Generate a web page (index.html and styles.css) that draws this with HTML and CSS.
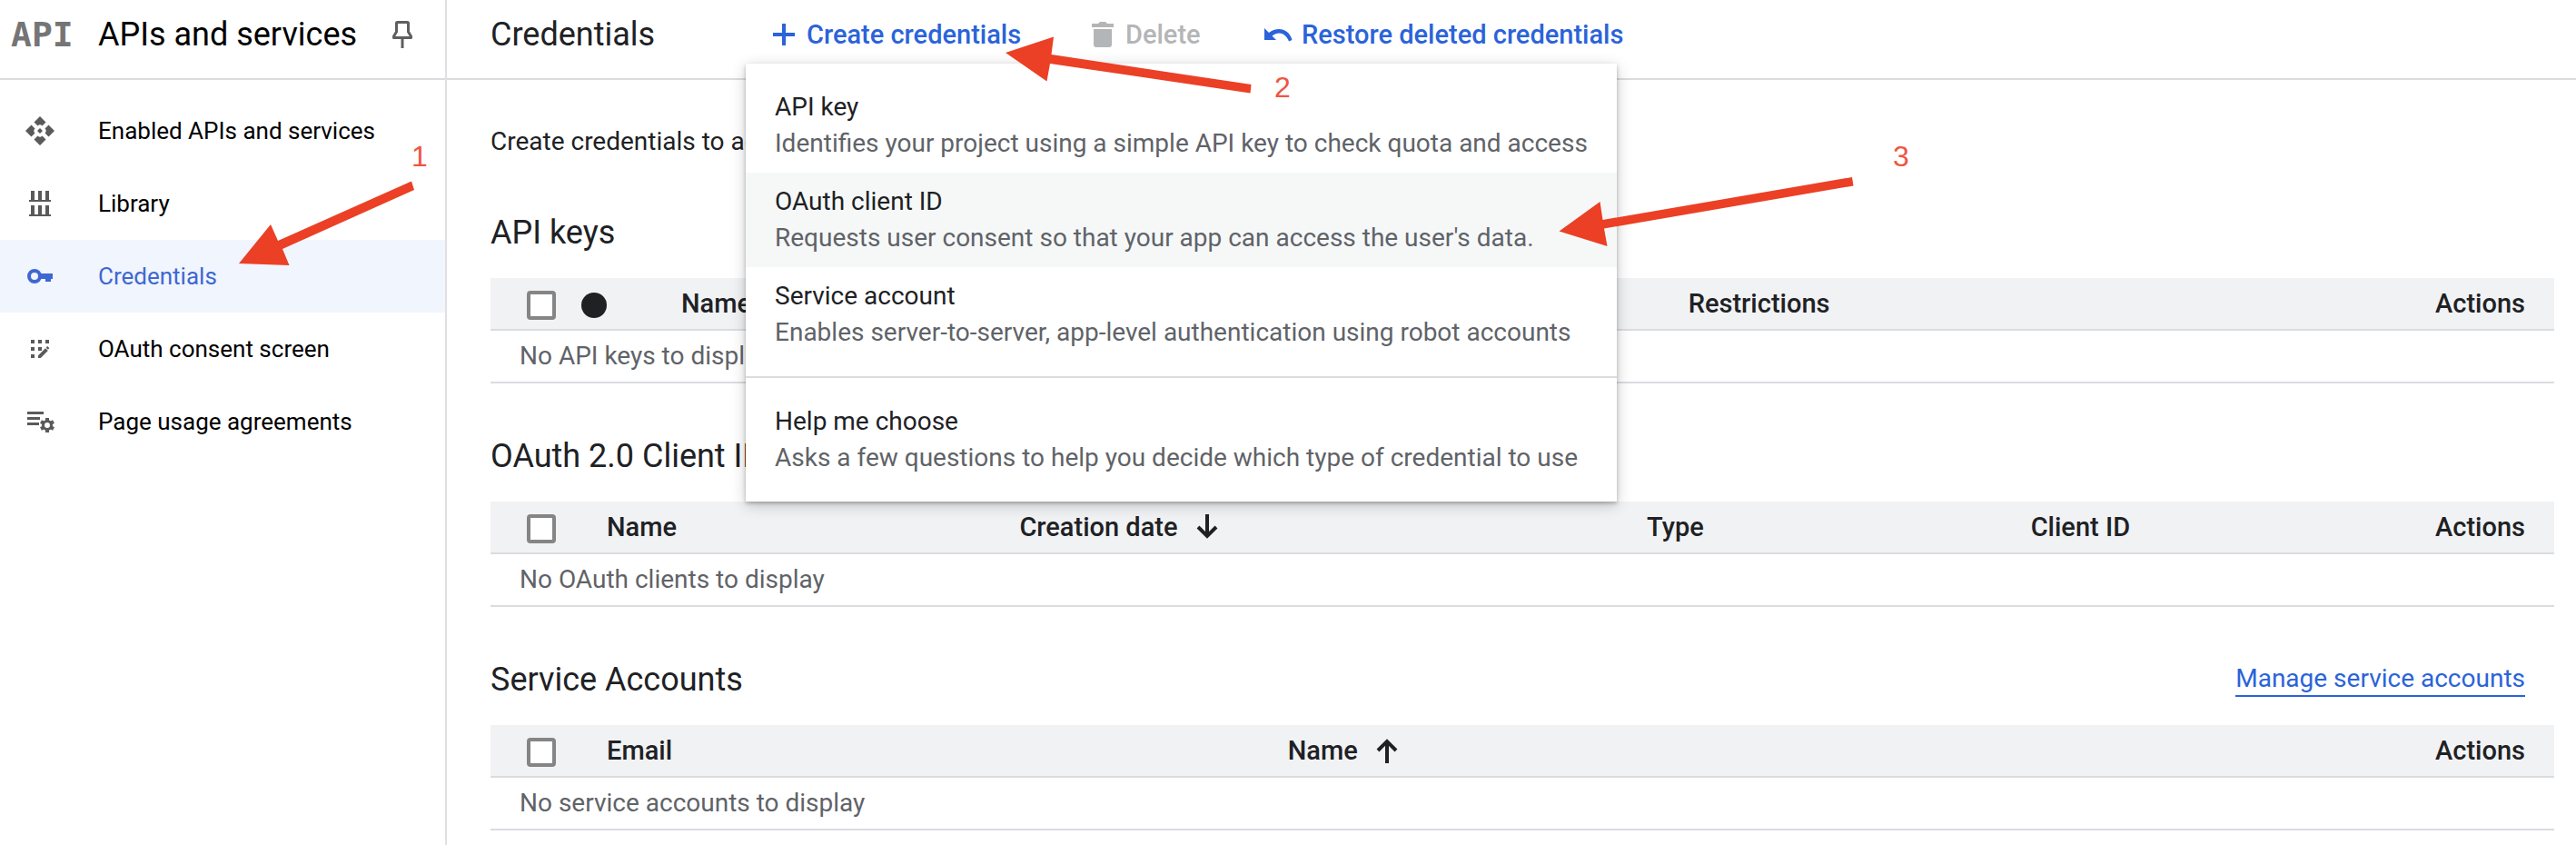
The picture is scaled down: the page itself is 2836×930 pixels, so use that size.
FILE: index.html
```html
<!DOCTYPE html>
<html lang="en">
<head>
<meta charset="utf-8">
<title>Credentials – APIs and services</title>
<link rel="stylesheet" href="styles.css">
</head>
<body>
<div class="app">
  <aside class="sidebar">
    <header class="bar sidebar-bar">
      <span class="logo">API</span>
      <span class="product">APIs and services</span>
      <button class="pin" type="button" aria-label="Pin">
        <svg viewBox="0 0 22 30" width="22" height="30" fill="none" stroke="#5f5f5f" stroke-width="3"><path d="M4.500 2.500Q4.500 1.500 5.500 1.500H16.500Q17.500 1.500 17.500 2.500V12L20.500 17V18.500H1.500V17L4.500 12Z" stroke-linejoin="round"/><path d="M11 18V30"/></svg>
      </button>
    </header>
    <nav class="nav">
      <a class="nav-item" href="#">
        <svg class="icon" viewBox="0 0 36 36"><path d="M18 2l6.500 6.500-4 4Q18 10 15.500 12.500l-4-4zM18 34l6.500-6.500-4-4Q18 26 15.500 23.500l-4 4zM2 18l6.500-6.500 4 4Q10 18 12.500 20.500l-4 4zM34 18l-6.500-6.500-4 4Q26 18 23.500 20.500l4 4zM18 15l3 3-3 3-3-3z"/></svg>
        Enabled APIs and services</a>
      <a class="nav-item" href="#">
        <svg class="icon" viewBox="0 0 18 18"><path d="M4 2h2v5h2V2h2v5h2V2h2v5h1v1H3V7h1zM4 10h2v5h2v-5h2v5h2v-5h2v5h1v1H3v-1h1z"/></svg>
        Library</a>
      <a class="nav-item selected" href="#" aria-current="page">
        <svg class="icon" viewBox="0 0 36 36"><circle cx="12" cy="18" r="6" fill="none" stroke="currentColor" stroke-width="4"/><path d="M19 15h13v6h-2v3h-6v-3h-5z"/></svg>
        Credentials</a>
      <a class="nav-item" href="#">
        <svg class="icon" viewBox="0 0 18 18"><path d="M4 4h2v2H4zM8 4h2v2H8zM12 4h2v2h-2zM4 8h2v2H4zM8 8h2v2H8zM4 12h2v2H4zM8 14v-1.400l4-4 1.400 1.400-4 4zM12.300 8.300l.8-.8 1.100 1.100-.8.8z"/></svg>
        OAuth consent screen</a>
      <a class="nav-item" href="#">
        <svg class="icon" viewBox="0 0 36 36"><path d="M4 7h18v3H4zM4 13h14v3H4zM4 19h13v3H4z"/><circle cx="26" cy="22" r="4.500" fill="none" stroke="currentColor" stroke-width="3"/><path d="M26 14v3M26 27v3M19 18l2.700 1.500M30.300 24.500l2.700 1.500M19 26l2.700-1.500M30.300 19.500l2.700-1.500" stroke="currentColor" stroke-width="4"/></svg>
        Page usage agreements</a>
    </nav>
  </aside>

  <main class="main">
    <header class="bar main-bar">
      <h1 class="title">Credentials</h1>
      <div class="toolbar">
        <div class="menu-anchor">
          <button class="action" type="button" aria-haspopup="menu" aria-expanded="true">
            <svg class="icon" viewBox="0 0 36 36"><path d="M16 6h4v10h10v4H20v10h-4V20H6v-4h10z"/></svg>Create credentials</button>
          <div class="menu" role="menu">
            <button class="menu-item" type="button" role="menuitem"><span>API key</span><span class="hint">Identifies your project using a simple API key to check quota and access</span></button>
            <button class="menu-item hovered" type="button" role="menuitem"><span>OAuth client ID</span><span class="hint">Requests user consent so that your app can access the user's data.</span></button>
            <button class="menu-item" type="button" role="menuitem"><span>Service account</span><span class="hint">Enables server-to-server, app-level authentication using robot accounts</span></button>
            <hr class="menu-rule">
            <button class="menu-item" type="button" role="menuitem"><span>Help me choose</span><span class="hint">Asks a few questions to help you decide which type of credential to use</span></button>
          </div>
        </div>
        <button class="action action-delete" type="button" disabled>
          <svg class="icon" viewBox="0 0 36 36"><path d="M13 6l2-2h6l2 2h7v4H6V6zM8 12h20v17q0 3-3 3H11q-3 0-3-3z"/></svg>Delete</button>
        <button class="action" type="button">
          <svg class="icon" viewBox="0 0 36 36"><path d="M2 11l5 5C16 9 29 11 32.500 24L29 25.500C25 15.500 17 14.500 10.500 19.500L15 24H2z"/></svg>Restore deleted credentials</button>
      </div>
    </header>

    <div class="content">
      <p class="intro">Create credentials to access your enabled APIs.</p>

      <section>
        <div class="section-head"><h2>API keys</h2></div>
        <table class="grid">
          <colgroup><col class="c-check-narrow"><col class="c-status"><col class="c-key-name"><col><col class="c-actions"></colgroup>
          <thead><tr>
            <th class="check"><input type="checkbox" aria-label="Select all API keys"></th>
            <th><span class="status-dot"></span></th>
            <th>Name</th><th>Restrictions</th><th class="actions">Actions</th>
          </tr></thead>
          <tbody><tr><td colspan="5">No API keys to display</td></tr></tbody>
        </table>
      </section>

      <section>
        <div class="section-head"><h2>OAuth 2.0 Client IDs</h2></div>
        <table class="grid">
          <colgroup><col class="c-check"><col class="c-client-name"><col class="c-date"><col class="c-type"><col><col class="c-actions"></colgroup>
          <thead><tr>
            <th class="check"><input type="checkbox" aria-label="Select all OAuth clients"></th>
            <th>Name</th>
            <th><span class="sorted">Creation date<svg class="sort" viewBox="0 0 24 28"><path d="M12 0v25M2 14l10 10 10-10"/></svg></span></th>
            <th>Type</th><th>Client ID</th><th class="actions">Actions</th>
          </tr></thead>
          <tbody><tr><td colspan="6">No OAuth clients to display</td></tr></tbody>
        </table>
      </section>

      <section>
        <div class="section-head"><h2>Service Accounts</h2><a class="manage" href="#">Manage service accounts</a></div>
        <table class="grid">
          <colgroup><col class="c-check"><col class="c-email"><col><col class="c-actions"></colgroup>
          <thead><tr>
            <th class="check"><input type="checkbox" aria-label="Select all service accounts"></th>
            <th>Email</th>
            <th><span class="sorted">Name<svg class="sort" viewBox="0 0 24 28"><path d="M12 28V3M2 14L12 4l10 10"/></svg></span></th>
            <th class="actions">Actions</th>
          </tr></thead>
          <tbody><tr><td colspan="4">No service accounts to display</td></tr></tbody>
        </table>
      </section>
    </div>
  </main>
</div>

<svg class="arrow arrow-1" viewBox="260 196 200 100"><path d="M263 290l35-43 8 18L453 199.500 456 209 311 274l7.500 18z"/></svg>
<svg class="arrow arrow-2" viewBox="1104 38 278 68"><path d="M1107 58l53-17.500-2.500 19.500L1377.500 93l-1 9.500L1156 70l-3.500 19.500z"/></svg>
<svg class="arrow arrow-3" viewBox="1712 192 332 82"><path d="M1716.500 254.500l45-32.500 3 20L2039 195l1.500 9.500L1766 251.500l3.500 19.500z"/></svg>
<span class="step step-1">1</span>
<span class="step step-2">2</span>
<span class="step step-3">3</span>
</body>
</html>
```

FILE: styles.css
```css
* { box-sizing: border-box; }

body {
  margin: 0;
  position: relative;
  overflow: hidden;
  background: #fff;
  color: #202124;
  font: 400 28px/40px Roboto, "Liberation Sans", sans-serif;
}

button { border: 0; padding: 0; background: none; font: inherit; color: inherit; }
h1, h2, p { margin: 0; font-weight: 400; }

.app { display: flex; min-height: 100vh; }
.icon { width: 36px; height: 36px; flex: none; fill: currentColor; }

.bar { display: flex; align-items: center; padding: 18px 0 28px; border-bottom: 2px solid #dadce0; }

/* Sidebar */
.sidebar { width: 492px; flex: none; border-right: 2px solid #e0e0e3; color: #000; }
.sidebar-bar { padding-left: 12px; padding-right: 36px; }
.logo { width: 96px; color: #757575; font: 700 38px/40px "DejaVu Sans Mono", monospace; }
.product { flex: 1; font-size: 36px; }
.pin { display: flex; }
.nav { padding-top: 16px; }
.nav-item {
  display: flex; align-items: center; gap: 46px;
  padding: 20px 26px;
  color: #000; font-size: 26px; text-decoration: none;
}
.nav-item .icon { color: #5a5a5a; }
.nav-item.selected { background: #f0f5fe; color: #3f67d2; }
.nav-item.selected .icon { color: inherit; }

/* Page header */
.main { flex: 1; min-width: 0; }
.main-bar { padding-left: 48px; }
.title { width: 305px; font-size: 36px; }
.toolbar { display: flex; gap: 64px; }
.action { display: flex; align-items: center; gap: 7px; color: #2b63d9; font-size: 29px; font-weight: 500; white-space: nowrap; }
.action:disabled { color: #b4b5b7; }
.action-delete { min-width: 130px; }

.menu-anchor { position: relative; min-width: 287px; }
.menu {
  position: absolute; top: 52px; left: -24px; z-index: 1;
  width: 959px; padding: 16px 0;
  background: #fff;
  box-shadow: 0 2px 4px rgba(0, 0, 0, .25), 0 4px 16px rgba(0, 0, 0, .2);
}
.menu-item { display: flex; flex-direction: column; width: 100%; padding: 12px 32px; text-align: left; white-space: nowrap; }
.menu-item.hovered { background: #f6f8f8; }
.hint { color: #5f6368; }
.menu-rule { margin: 16px 0; border: 0; border-top: 2px solid #dadce0; }

/* Content */
.content { padding: 48px 24px 0 48px; }
.section-head { display: flex; align-items: center; justify-content: space-between; padding: 60px 32px 30px 0; }
.section-head h2 { font-size: 36px; }
.manage { height: 38px; border-bottom: 2px solid #2b63d9; color: #2b63d9; line-height: 36px; text-decoration: none; }

.grid { width: 100%; table-layout: fixed; border-collapse: separate; border-spacing: 0; }
.grid th, .grid td { height: 58px; padding: 0; border-bottom: 2px solid #dadce0; text-align: left; vertical-align: middle; }
.grid th { background: #f1f2f4; font-size: 29px; font-weight: 500; }
.grid td { padding-left: 32px; color: #5f6368; }
.grid .check { padding-left: 40px; }
.grid .actions { padding-right: 32px; text-align: right; }
.grid input {
  display: block; appearance: none;
  width: 32px; height: 32px; margin: 4px 0 0;
  border: 4px solid #858585; border-radius: 4px; background: #fff;
}
.status-dot { display: block; width: 28px; height: 28px; margin-top: 4px; border-radius: 50%; background: #202124; }
.sorted { display: flex; align-items: center; gap: 20px; }
.sort { width: 24px; height: 28px; fill: none; stroke: #202124; stroke-width: 4; }

.c-check-narrow { width: 100px; }
.c-status { width: 110px; }
.c-check { width: 128px; }
.c-actions { width: 200px; }
.c-key-name { width: 48.8%; }
.c-client-name { width: 20%; }
.c-date { width: 30.4%; }
.c-type { width: 18.6%; }
.c-email { width: 33%; }

/* Walkthrough annotations over the page */
.arrow { position: absolute; z-index: 2; fill: #eb4025; }
.arrow-1 { left: 260px; top: 196px; width: 200px; }
.arrow-2 { left: 1104px; top: 38px; width: 278px; }
.arrow-3 { left: 1712px; top: 192px; width: 332px; }
.step { position: absolute; z-index: 2; color: #f05442; font: 32px/36px "Liberation Sans", sans-serif; }
.step-1 { left: 453px; top: 154px; }
.step-2 { left: 1403px; top: 78px; }
.step-3 { left: 2084px; top: 154px; }
```
